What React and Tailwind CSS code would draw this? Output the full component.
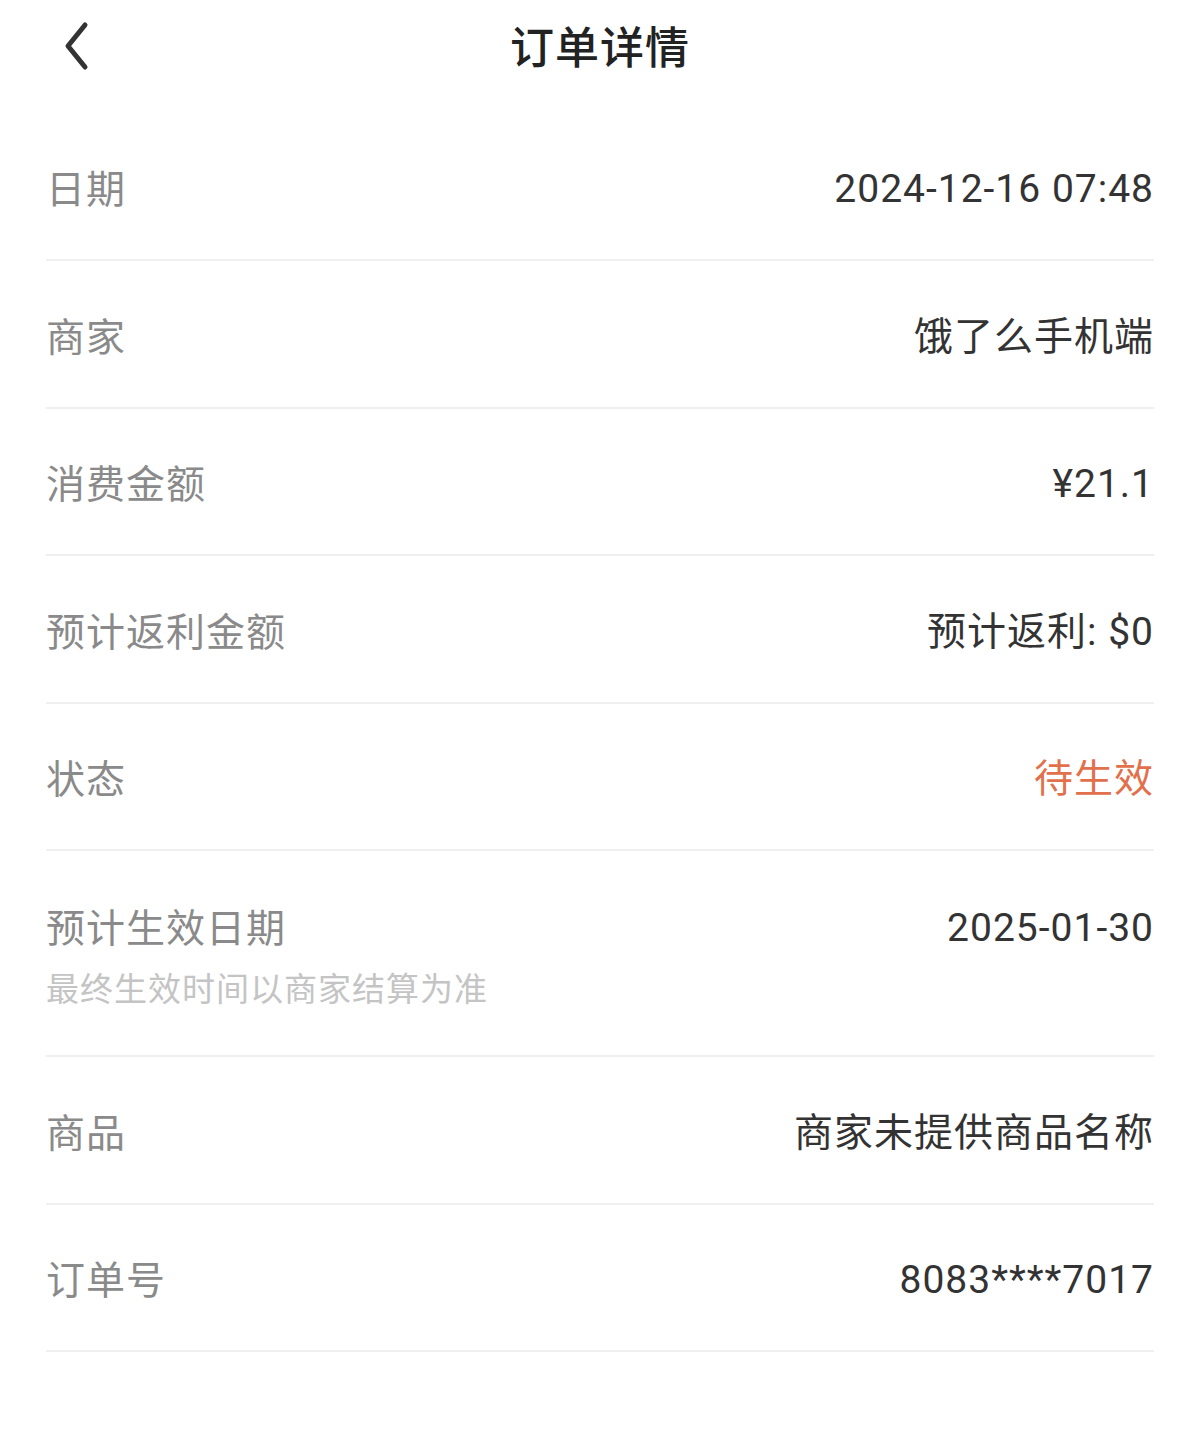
import React from "react";

const rows = [
  { label: "日期", value: "2024-12-16 07:48" },
  { label: "商家", value: "饿了么手机端" },
  { label: "消费金额", value: "¥21.1" },
  { label: "预计返利金额", value: "预计返利: $0" },
  { label: "状态", value: "待生效", orange: true },
  { label: "预计生效日期", value: "2025-01-30", sub: "最终生效时间以商家结算为准" },
  { label: "商品", value: "商家未提供商品名称" },
  { label: "订单号", value: "8083****7017" },
];

const valueFont = { fontFamily: 'Roboto, "Noto Sans CJK SC", sans-serif' };

export default function App() {
  return (
    <div
      className="w-[1200px] min-h-[1441px] bg-white"
      style={{ fontFamily: '"Noto Sans CJK SC", "Noto Sans", sans-serif' }}
    >
      <div className="relative h-[113.5px] flex items-start justify-center">
        <div className="absolute left-[58px] top-[20px] w-[36px] h-[52px] flex items-center justify-center">
          <svg width="30" height="50" viewBox="0 0 30 50" fill="none">
            <path d="M24 4 L7 25 L24 46" stroke="#333" strokeWidth="5" strokeLinecap="round" strokeLinejoin="round" />
          </svg>
        </div>
        <div className="mt-[15px] text-[44px] leading-[60px] font-medium text-[#222] tracking-[1px]">订单详情</div>
      </div>
      <div className="mx-[46px]">
        {rows.map((r) =>
          r.sub ? (
            <div key={r.label} className="h-[206px] border-b-2 border-[#efefef] flex justify-between items-start pt-[49px]">
              <div className="flex flex-col">
                <div className="text-[39px] leading-[50px] text-[#8a8a8a] tracking-[1px]">{r.label}</div>
                <div className="mt-[12px] text-[33px] leading-[50px] text-[#c4c4c4] tracking-[1px]">{r.sub}</div>
              </div>
              <div className="mt-[3px] text-[39px] leading-[50px] text-[#333] tracking-[1px]" style={valueFont}>{r.value}</div>
            </div>
          ) : (
            <div key={r.label} className="h-[147.5px] border-b-2 border-[#efefef] flex justify-between items-center">
              <div className="text-[39px] leading-[50px] text-[#8a8a8a] tracking-[1px]">{r.label}</div>
              <div
                className={`pt-[6px] text-[39px] leading-[50px] tracking-[1px] ${r.orange ? "text-[#e2704c]" : "text-[#333]"}`}
                style={valueFont}
              >
                {r.value}
              </div>
            </div>
          )
        )}
      </div>
    </div>
  );
}
